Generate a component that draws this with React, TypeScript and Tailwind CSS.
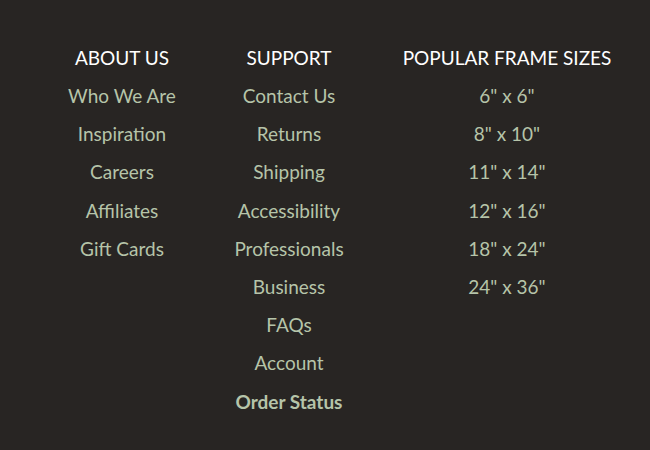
const columns = [
  {
    title: "ABOUT US",
    width: "w-[164px]",
    links: ["Who We Are", "Inspiration", "Careers", "Affiliates", "Gift Cards"],
  },
  {
    title: "SUPPORT",
    width: "w-[170px]",
    links: [
      "Contact Us",
      "Returns",
      "Shipping",
      "Accessibility",
      "Professionals",
      "Business",
      "FAQs",
      "Account",
      "Order Status",
    ],
  },
  {
    title: "POPULAR FRAME SIZES",
    width: "w-[266px]",
    links: ['6" x 6"', '8" x 10"', '11" x 14"', '12" x 16"', '18" x 24"', '24" x 36"'],
  },
];

export default function App() {
  return (
    <div className="h-[450px] w-[650px] bg-[#282523] font-['Lato','Liberation_Sans',sans-serif] text-[19px]">
      <div className="flex pl-[40px] pt-[45px]">
        {columns.map((col) => (
          <div key={col.title} className={`${col.width} flex flex-col items-center`}>
            <h3 className="leading-[26px] text-white">{col.title}</h3>
            <ul className="mt-[6px] flex flex-col items-center">
              {col.links.map((link) => (
                <li
                  key={link}
                  className={
                    link === "Order Status"
                      ? "leading-[38.2px] font-bold text-[#b6c4a9]"
                      : "leading-[38.2px] text-[#b6c4a9]"
                  }
                >
                  {link}
                </li>
              ))}
            </ul>
          </div>
        ))}
      </div>
    </div>
  );
}
